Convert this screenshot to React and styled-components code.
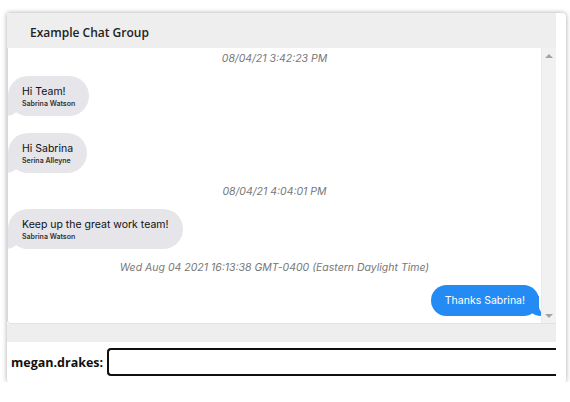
import styled, { createGlobalStyle } from 'styled-components'

const GlobalStyle = createGlobalStyle`
  html, body {
    margin: 0;
    padding: 0;
    background: #ffffff;
  }
  body {
    font-family: Inter, "Noto Sans", sans-serif;
  }
`

const Page = styled.div`
  padding: 13px 0 0 7px;
`

const Card = styled.div`
  width: 559px;
  height: 369px;
  padding-right: 10px;
  box-sizing: border-box;
  background: #fff;
  border-radius: 0 4px 2px 2px;
  box-shadow: 0 0 5px rgba(0, 0, 0, 0.35);
  overflow: hidden;
`

const Column = styled.div`
  display: flex;
  flex-direction: column;
  height: 100%;
`

const Header = styled.div`
  flex: 0 0 35px;
  display: flex;
  align-items: center;
  box-sizing: border-box;
  padding: 4px 0 0 23px;
  background: #eeeeee;
  font-family: "Open Sans", sans-serif;
  font-weight: 600;
  font-size: 12px;
  color: #222;
`

const Panel = styled.div`
  flex: 0 0 276px;
  display: flex;
  background: #fff;
  border-left: 1px solid #d8d8d8;
  border-bottom: 1px solid #e2e2e2;
  border-radius: 0 0 0 4px;
  box-sizing: border-box;
  overflow: hidden;
`

const List = styled.div`
  flex: 1;
  display: flex;
  flex-direction: column;
  padding-top: 4px;
  overflow: hidden;
`

const Stamp = styled.div`
  margin: ${p => (p.first ? '0 0 10px' : '12px 0 10px')};
  text-align: center;
  font-size: 10.5px;
  line-height: 14px;
  font-style: italic;
  color: #777;
`

const Bubble = styled.div`
  position: relative;
  align-self: ${p => (p.mine ? 'flex-end' : 'flex-start')};
  margin: ${p => (p.after ? '17px' : '0')} ${p => (p.mine ? '2px' : '0')} 0 0;
  padding: ${p => (p.mine ? '8px 14px' : '7.5px 14px')};
  border-radius: 20px;
  background: ${p => (p.mine ? '#248bf5' : '#e5e5ea')};
  color: ${p => (p.mine ? '#fff' : '#111')};

  &::before,
  &::after {
    content: '';
    position: absolute;
    bottom: 0;
    height: 20px;
  }
  &::before {
    width: 20px;
    background: ${p => (p.mine ? '#248bf5' : '#e5e5ea')};
    ${p => (p.mine
      ? 'right: -7px; border-bottom-left-radius: 16px 14px;'
      : 'left: -7px; border-bottom-right-radius: 16px 14px;')}
  }
  &::after {
    width: 26px;
    background: #fff;
    ${p => (p.mine
      ? 'right: -26px; border-bottom-left-radius: 10px;'
      : 'left: -26px; border-bottom-right-radius: 10px;')}
  }
`

const Text = styled.div`
  font-size: 10.5px;
  line-height: 15px;
  white-space: nowrap;
`

const Name = styled.div`
  font-size: 7px;
  font-weight: 600;
  line-height: 10px;
  color: #333;
  white-space: nowrap;
`

const Track = styled.div`
  flex: 0 0 15px;
  display: flex;
  flex-direction: column;
  justify-content: space-between;
  align-items: center;
  padding: 6px 0 5px;
  box-sizing: border-box;
  background: #f1f1f1;
  border-left: 1px solid #eaeaea;
`

const Arrow = styled.div`
  width: 0;
  height: 0;
  border-left: 4px solid transparent;
  border-right: 4px solid transparent;
  ${p => (p.down
    ? 'border-top: 4px solid #a3a3a3;'
    : 'border-bottom: 4px solid #a3a3a3;')}
`

const Strip = styled.div`
  flex: 0 0 18px;
  background: #eeeeee;
`

const InputRow = styled.div`
  flex: 0 0 40px;
  display: flex;
  align-items: center;
  padding-left: 4px;
  white-space: nowrap;
`

const Label = styled.label`
  font-family: "Open Sans", sans-serif;
  font-weight: 700;
  font-size: 12.5px;
  color: #111;
  margin-right: 4px;
`

const Field = styled.input`
  flex: 1;
  min-width: 0;
  height: 28px;
  box-sizing: border-box;
  border: 2px solid #101010;
  border-right: none;
  border-radius: 4px 0 0 4px;
  padding: 0 5px;
  font-family: Inter, sans-serif;
  font-size: 12px;
  outline: none;
  background: #fff;
`

const messages = [
  { kind: 'stamp', text: '08/04/21 3:42:23 PM' },
  { kind: 'msg', text: 'Hi Team!', name: 'Sabrina Watson' },
  { kind: 'msg', text: 'Hi Sabrina', name: 'Serina Alleyne' },
  { kind: 'stamp', text: '08/04/21 4:04:01 PM' },
  { kind: 'msg', text: 'Keep up the great work team!', name: 'Sabrina Watson' },
  { kind: 'stamp', text: 'Wed Aug 04 2021 16:13:38 GMT-0400 (Eastern Daylight Time)' },
  { kind: 'msg', text: 'Thanks Sabrina!', mine: true },
]

export default function App() {
  return (
    <>
      <GlobalStyle />
      <Page>
        <Card>
          <Column>
            <Header>Example Chat Group</Header>
            <Panel>
              <List>
                {messages.map((m, i) => {
                  const prev = messages[i - 1]
                  if (m.kind === 'stamp') {
                    return <Stamp key={i} first={i === 0}>{m.text}</Stamp>
                  }
                  return (
                    <Bubble key={i} mine={m.mine} after={prev && prev.kind === 'msg'}>
                      <Text>{m.text}</Text>
                      {m.name && <Name>{m.name}</Name>}
                    </Bubble>
                  )
                })}
              </List>
              <Track>
                <Arrow />
                <Arrow down />
              </Track>
            </Panel>
            <Strip />
            <InputRow>
              <Label htmlFor="chat-input">megan.drakes:</Label>
              <Field id="chat-input" type="text" autoFocus />
            </InputRow>
          </Column>
        </Card>
      </Page>
    </>
  )
}
